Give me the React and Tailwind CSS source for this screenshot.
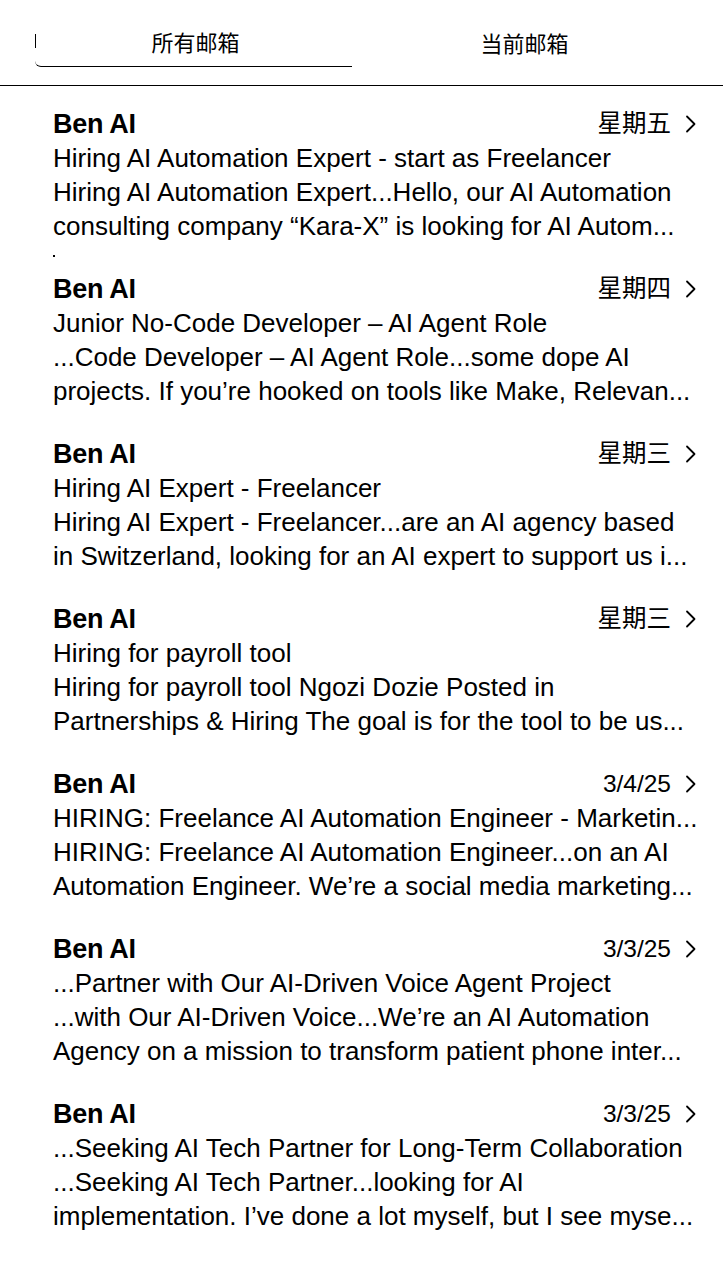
import React from 'react';

const emails = [
  {
    date: '星期五',
    subject: 'Hiring AI Automation Expert - start as Freelancer',
    preview: [
      'Hiring AI Automation Expert...Hello, our AI Automation',
      'consulting company “Kara-X” is looking for AI Autom...',
    ],
    dot: true,
  },
  {
    date: '星期四',
    subject: 'Junior No-Code Developer – AI Agent Role',
    preview: [
      '...Code Developer – AI Agent Role...some dope AI',
      'projects. If you’re hooked on tools like Make, Relevan...',
    ],
  },
  {
    date: '星期三',
    subject: 'Hiring AI Expert - Freelancer',
    preview: [
      'Hiring AI Expert - Freelancer...are an AI agency based',
      'in Switzerland, looking for an AI expert to support us i...',
    ],
  },
  {
    date: '星期三',
    subject: 'Hiring for payroll tool',
    preview: [
      'Hiring for payroll tool Ngozi Dozie Posted in',
      'Partnerships & Hiring The goal is for the tool to be us...',
    ],
  },
  {
    date: '3/4/25',
    subject: 'HIRING: Freelance AI Automation Engineer - Marketin...',
    preview: [
      'HIRING: Freelance AI Automation Engineer...on an AI',
      'Automation Engineer. We’re a social media marketing...',
    ],
  },
  {
    date: '3/3/25',
    subject: '...Partner with Our AI-Driven Voice Agent Project',
    preview: [
      '...with Our AI-Driven Voice...We’re an AI Automation',
      'Agency on a mission to transform patient phone inter...',
    ],
  },
  {
    date: '3/3/25',
    subject: '...Seeking AI Tech Partner for Long-Term Collaboration',
    preview: [
      '...Seeking AI Tech Partner...looking for AI',
      'implementation. I’ve done a lot myself, but I see myse...',
    ],
  },
];

function Chevron() {
  return (
    <svg width="12" height="18" viewBox="0 0 12 18" fill="none" className="ml-[14px]">
      <path d="M2 1.5 L9.5 9 L2 16.5" stroke="#000" strokeWidth="1.8" strokeLinecap="round" strokeLinejoin="round" />
    </svg>
  );
}

function EmailRow({ email }) {
  return (
    <div className="h-[165px] pl-[53px] pr-[26px] pt-[18px] text-black">
      <div className="flex items-center justify-between h-[34px]">
        <span className="text-[27px] font-bold tracking-[-0.3px]">Ben AI</span>
        <div className="flex items-center">
          <span className="text-[24.5px]">{email.date}</span>
          <Chevron />
        </div>
      </div>
      <div className="text-[26px] leading-[34px] whitespace-nowrap">{email.subject}</div>
      {email.preview.map((line, i) => (
        <div key={i} className="text-[26px] leading-[34px] whitespace-nowrap">
          {line}
        </div>
      ))}
      {email.dot && <div className="w-[2px] h-[2px] bg-black mt-[12px]" />}
    </div>
  );
}

export default function App() {
  return (
    <div
      className="w-[723px] min-h-[1280px] bg-white overflow-hidden"
      style={{ fontFamily: '"Liberation Sans", "Noto Sans CJK SC", sans-serif' }}
    >
      <div className="h-[86px] flex border-b border-black">
        <div className="w-[362px] pl-[35px] pt-[30px]">
          <div className="relative w-[317px] h-[37px] border-b border-black rounded-bl-[6px] flex items-center justify-center">
            <div className="absolute left-0 top-[4px] w-[1px] h-[14px] bg-black" />
            <span className="text-[22px] text-black -mt-[10px] ml-[4px]">所有邮箱</span>
          </div>
        </div>
        <div className="flex-1 flex justify-center pt-[28px]">
          <span className="text-[22px] text-black ml-[-36px]">当前邮箱</span>
        </div>
      </div>
      <div className="pt-[3px]">
        {emails.map((e, i) => (
          <EmailRow key={i} email={e} />
        ))}
      </div>
    </div>
  );
}
